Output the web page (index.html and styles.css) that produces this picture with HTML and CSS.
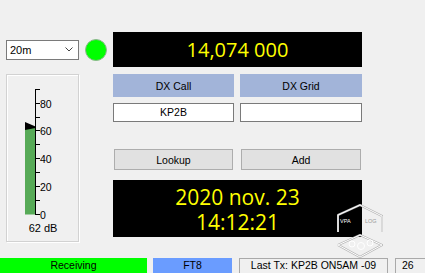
FILE: index.html
```html
<!DOCTYPE html>
<html lang="fr">
<head>
    <meta charset="UTF-8">
    <meta name="viewport" content="width=device-width, initial-scale=1.0">
    <title>Log - KP2B</title>
    <link rel="stylesheet" href="styles.css">
</head>
<body>
    <div class="window">
        <div class="main">
            <div class="combo">
                <span>20m</span>
                <svg class="combo-arrow" width="8" height="5" viewBox="0 0 8 5">
                    <polyline points="0.5,0.5 4,4 7.5,0.5" fill="none" stroke="#444" stroke-width="1"/>
                </svg>
            </div>
            <div class="led"></div>
            <div class="freq">14,074 000</div>

            <div class="meter">
                <svg class="meter-scale" width="71" height="146" viewBox="0 0 71 146">
                    <rect x="18" y="53" width="10.5" height="86.5" fill="#57aa57"/>
                    <polygon points="18,47 28.5,51.5 28.5,53 18,55" fill="#000"/>
                    <g stroke="#000" stroke-width="1" fill="none">
                        <line x1="28.5" y1="14" x2="28.5" y2="140"/>
                        <line x1="28.5" y1="14.5" x2="33" y2="14.5"/>
                        <line x1="28.5" y1="28.5" x2="33" y2="28.5"/>
                        <line x1="28.5" y1="42.5" x2="33" y2="42.5"/>
                        <line x1="28.5" y1="55.5" x2="33" y2="55.5"/>
                        <line x1="28.5" y1="69.5" x2="33" y2="69.5"/>
                        <line x1="28.5" y1="83.5" x2="33" y2="83.5"/>
                        <line x1="28.5" y1="97.5" x2="33" y2="97.5"/>
                        <line x1="28.5" y1="111.5" x2="33" y2="111.5"/>
                        <line x1="28.5" y1="125.5" x2="33" y2="125.5"/>
                        <line x1="28.5" y1="139.5" x2="33" y2="139.5"/>
                    </g>
                    <g class="scale-labels">
                        <text x="33" y="32.5">80</text>
                        <text x="33" y="59.5">60</text>
                        <text x="33" y="87.5">40</text>
                        <text x="33" y="115.5">20</text>
                        <text x="33" y="143.5">0</text>
                    </g>
                </svg>
                <div class="meter-value">62 dB</div>
            </div>

            <div class="dx">
                <div class="dx-row">
                    <div class="dx-head">DX Call</div>
                    <div class="dx-head">DX Grid</div>
                </div>
                <div class="dx-row fields">
                    <div class="field">KP2B</div>
                    <div class="field"></div>
                </div>
                <div class="dx-row buttons">
                    <button>Lookup</button>
                    <button>Add</button>
                </div>
                <div class="clock">
                    <div class="clock-line">2020 nov. 23</div>
                    <div class="clock-line">14:12:21</div>
                </div>
            </div>
        </div>

        <div class="statusbar">
            <div class="status-item rx">Receiving</div>
            <div class="status-item mode">FT8</div>
            <div class="status-item sunken last-tx">Last Tx: KP2B ON5AM -09</div>
            <div class="status-item sunken count">26</div>
        </div>

        <!-- logo en filigrane -->
        <svg class="watermark" width="56" height="64" viewBox="0 0 56 64">
            <g fill="none" stroke-linejoin="round">
                <g stroke="#b4b4b4" stroke-width="2">
                    <polyline points="8,34 8,17 30,7 52,18 52,34"/>
                    <polyline points="8,47 30,37 52,47 30,59 8,47"/>
                </g>
                <g stroke="#fff" stroke-width="1">
                    <polyline points="8,34 8,17 30,7 52,18 52,34"/>
                    <polyline points="8,47 30,37 52,47 30,59 8,47"/>
                    <circle cx="22" cy="46" r="3"/>
                    <circle cx="31" cy="48" r="3.5"/>
                    <circle cx="40" cy="45" r="3"/>
                </g>
            </g>
            <text x="10" y="25" class="wm-text">VPA</text>
            <text x="35" y="25" class="wm-text wm-dark">LOG</text>
        </svg>
    </div>
</body>
</html>
```

FILE: styles.css
```css
body {
    margin: 0;
    background: #f0f0f0;
    font-family: 'Liberation Sans', Arial, sans-serif;
    font-size: 10.5px;
    color: #000;
}

.window {
    position: relative;
    width: 425px;
    height: 273px;
    overflow: hidden;
}

.main {
    display: grid;
    grid-template-columns: 73px 22px 249px;
    grid-template-rows: 35px auto;
    column-gap: 6px;
    row-gap: 7px;
    padding: 32px 0 0 6px;
}

.combo {
    align-self: center;
    height: 20px;
    box-sizing: border-box;
    border: 1px solid #7a7a7a;
    background: #fff;
    display: flex;
    align-items: center;
    justify-content: space-between;
    padding: 0 5px 0 3px;
    font-size: 11px;
}

.combo-arrow {
    display: block;
}

.led {
    align-self: center;
    width: 20px;
    height: 20px;
    border-radius: 50%;
    background: #00ff00;
    border: 1px solid #8cb88c;
}

.freq {
    background: #000;
    color: #ffff00;
    font-family: 'Open Sans', sans-serif;
    font-size: 20px;
    display: flex;
    align-items: center;
    justify-content: center;
}

.meter {
    grid-column: 1;
    height: 168px;
    box-sizing: border-box;
    border: 1px solid #d2d2d2;
    box-shadow: inset 1px 1px 0 #fff, 1px 1px 0 #fff;
}

.meter-scale {
    display: block;
}

.scale-labels text {
    font-family: 'Liberation Sans', Arial, sans-serif;
    font-size: 10.5px;
    fill: #000;
}

.meter-value {
    margin-top: 1px;
    line-height: 13px;
    font-size: 11px;
    text-align: center;
    padding-left: 1px;
}

.dx {
    grid-column: 3;
    display: flex;
    flex-direction: column;
}

.dx-row {
    display: grid;
    grid-template-columns: 121px 122px;
    column-gap: 6px;
}

.dx-head {
    height: 23px;
    background: #a2b4d9;
    display: flex;
    align-items: center;
    justify-content: center;
}

.fields {
    margin-top: 6px;
}

.field {
    height: 19px;
    box-sizing: border-box;
    border: 1px solid #7a7a7a;
    background: #fff;
    display: flex;
    align-items: center;
    justify-content: center;
    padding-bottom: 2px;
}

.buttons {
    margin-top: 27px;
}

.buttons button {
    margin: 0 1px;
    height: 21px;
    background: #e1e1e1;
    border: 1px solid #adadad;
    font-family: inherit;
    font-size: inherit;
    color: #000;
    padding: 0;
}

.clock {
    margin-top: 10px;
    height: 57px;
    box-sizing: border-box;
    padding-top: 5px;
    background: #000;
    color: #ffff00;
    font-family: 'Open Sans', sans-serif;
    font-size: 21px;
    text-align: center;
}

.clock-line {
    height: 25px;
    line-height: 25px;
}

.statusbar {
    display: flex;
    margin-top: 16px;
    height: 15px;
}

.status-item {
    height: 18px;
    box-sizing: border-box;
    line-height: 15px;
    text-align: center;
    flex: none;
}

.rx {
    width: 147px;
    background: #00ff00;
}

.mode {
    width: 79px;
    margin-left: 6px;
    background: #6a9cff;
}

.sunken {
    margin-left: 7px;
    border: 1px solid #a9a9a9;
    line-height: 13px;
}

.last-tx {
    width: 149px;
}

.count {
    width: 40px;
    text-align: left;
    padding-left: 6px;
}

.watermark {
    position: absolute;
    left: 330px;
    top: 198px;
    pointer-events: none;
}

.wm-text {
    font-family: 'Liberation Sans', Arial, sans-serif;
    font-size: 5.5px;
    fill: #fff;
}

.wm-dark {
    fill: #9a9a9a;
}
```
